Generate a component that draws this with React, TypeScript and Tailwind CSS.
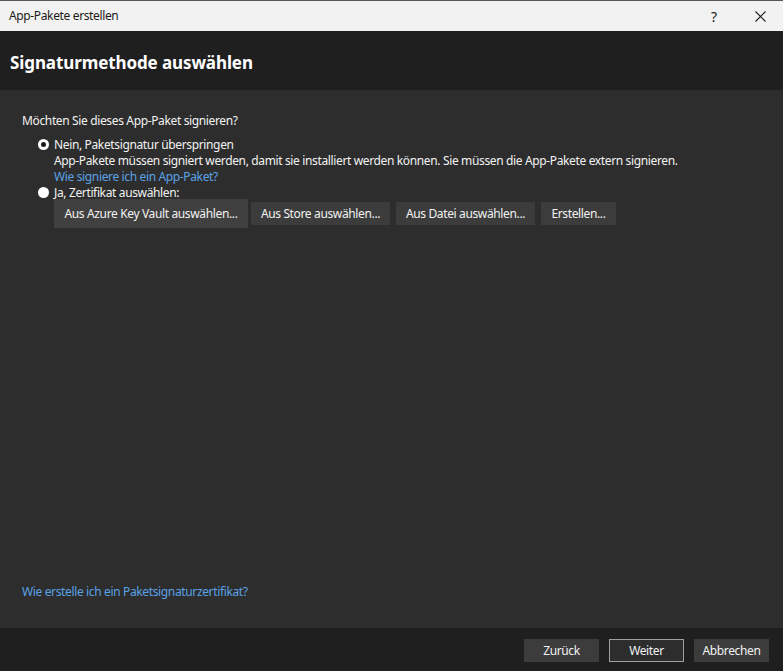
import React from "react";

const font = { fontFamily: '"Segoe UI", "Noto Sans", "Open Sans", sans-serif' };

function Btn({ children, className = "" }: { children: React.ReactNode; className?: string }) {
  return (
    <div className={`flex items-center justify-center text-[12px] tracking-[-0.36px] text-[#f2f2f2] ${className}`}>{children}</div>
  );
}

export default function App() {
  return (
    <div className="w-[783px] h-[671px] flex flex-col bg-[#2d2d2d] overflow-hidden" style={font}>
      <div className="h-[31px] border-t border-[#595959] bg-[#f2f2f2] flex items-center shrink-0">
        <div className="pl-[9px] text-[12px] tracking-[-0.36px] text-[#1b1b1b] flex-1">App-Pakete erstellen</div>
        <div className="w-[46px] h-full flex items-center justify-center text-[14px] text-[#1b1b1b]">?</div>
        <div className="w-[46px] h-full flex items-center justify-center">
          <svg width="11" height="11" viewBox="0 0 11 11">
            <path d="M0.5 0.5 L10.5 10.5 M10.5 0.5 L0.5 10.5" stroke="#1b1b1b" strokeWidth="1.1" />
          </svg>
        </div>
      </div>
      <div className="h-[59px] bg-[#1f1f1f] flex items-center px-[10px] pt-[4px] shrink-0">
        <div className="text-[17px] font-bold tracking-[-0.1px] text-white">Signaturmethode auswählen</div>
      </div>
      <div className="flex-1 flex flex-col px-[22px] pt-[23px] pb-[28px] text-[12px] leading-[16px] tracking-[-0.36px] text-[#f2f2f2]">
        <div>Möchten Sie dieses App-Paket signieren?</div>
        <div className="mt-[8px] flex flex-col pl-[32px]">
          <div className="flex items-center relative">
            <span className="absolute left-[-16px] top-[2px] w-[11px] h-[11px] rounded-full bg-white flex items-center justify-center">
              <span className="w-[5px] h-[5px] rounded-full bg-[#1a1a1a]" />
            </span>
            <span>Nein, Paketsignatur überspringen</span>
          </div>
          <div>App-Pakete müssen signiert werden, damit sie installiert werden können. Sie müssen die App-Pakete extern signieren.</div>
          <div className="text-[#5aa2e6]">Wie signiere ich ein App-Paket?</div>
          <div className="flex items-center relative">
            <span className="absolute left-[-16px] top-[2px] w-[11px] h-[11px] rounded-full bg-white" />
            <span>Ja, Zertifikat auswählen:</span>
          </div>
          <div className="flex items-center mt-[-2px]">
            <Btn className="w-[194px] h-[29px] bg-[#404040]">Aus Azure Key Vault auswählen...</Btn>
            <Btn className="ml-[3px] w-[139px] h-[23px] bg-[#3c3c3c]">Aus Store auswählen...</Btn>
            <Btn className="ml-[6px] w-[139px] h-[23px] bg-[#3c3c3c]">Aus Datei auswählen...</Btn>
            <Btn className="ml-[6px] w-[75px] h-[23px] bg-[#3c3c3c]">Erstellen...</Btn>
          </div>
        </div>
        <div className="mt-auto text-[#5aa2e6]">Wie erstelle ich ein Paketsignaturzertifikat?</div>
      </div>
      <div className="h-[43px] bg-[#1f1f1f] flex items-center justify-end gap-[10px] pr-[14px] pt-[2px] shrink-0">
        <Btn className="w-[75px] h-[23px] bg-[#3c3c3c]">Zurück</Btn>
        <Btn className="w-[75px] h-[23px] bg-[#2d2d2d] border border-[#a0a0a0]">Weiter</Btn>
        <Btn className="w-[75px] h-[23px] bg-[#3c3c3c]">Abbrechen</Btn>
      </div>
    </div>
  );
}
